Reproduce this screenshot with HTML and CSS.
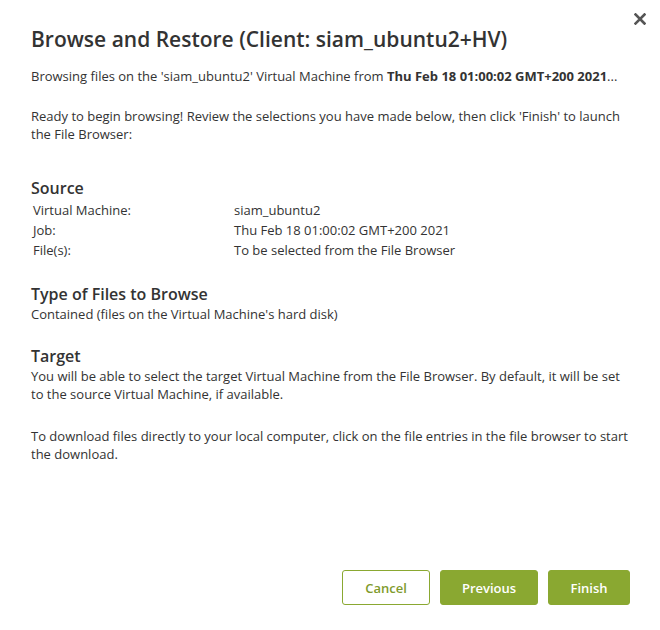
FILE: index.html
```html
<!DOCTYPE html>
<html>
<head>
<meta charset="utf-8">
<link rel="stylesheet" href="styles.css">
</head>
<body>
<div class="dialog">
  <button class="close" aria-label="Close">
    <svg width="12" height="12" viewBox="0 0 12 12"><path d="M1.5 1.5 L10.5 10.5 M10.5 1.5 L1.5 10.5" stroke="#555" stroke-width="2.6" stroke-linecap="square"/></svg>
  </button>
  <h1 class="title">Browse and Restore (Client: siam_ubuntu2+HV)</h1>
  <p class="lead">Browsing files on the 'siam_ubuntu2' Virtual Machine from <b>Thu Feb 18 01:00:02 GMT+200 2021</b>...</p>
  <p class="para">Ready to begin browsing! Review the selections you have made below, then click 'Finish' to launch the File Browser:</p>

  <section class="section source">
    <h2 class="heading">Source</h2>
    <div class="grid">
      <span>Virtual Machine:</span><span>siam_ubuntu2</span>
      <span>Job:</span><span>Thu Feb 18 01:00:02 GMT+200 2021</span>
      <span>File(s):</span><span>To be selected from the File Browser</span>
    </div>
  </section>

  <section class="section type">
    <h2 class="heading">Type of Files to Browse</h2>
    <p class="text">Contained (files on the Virtual Machine's hard disk)</p>
  </section>

  <section class="section target">
    <h2 class="heading">Target</h2>
    <p class="text">You will be able to select the target Virtual Machine from the File Browser. By default, it will be set to the source Virtual Machine, if available.</p>
    <p class="text spaced">To download files directly to your local computer, click on the file entries in the file browser to start the download.</p>
  </section>

  <div class="actions">
    <button class="btn outline">Cancel</button>
    <button class="btn solid prev">Previous</button>
    <button class="btn solid finish">Finish</button>
  </div>
</div>
</body>
</html>
```
FILE: styles.css
```css
html, body {
  margin: 0;
  padding: 0;
  background: #fff;
}
body {
  font-family: "Open Sans", "Liberation Sans", sans-serif;
  color: #333;
  font-size: 13px;
}
.dialog {
  position: relative;
  width: 660px;
  height: 630px;
  box-sizing: border-box;
  padding: 24px 30px 0 31px;
  display: flex;
  flex-direction: column;
}
.close {
  position: absolute;
  top: 13px;
  right: 14px;
  border: 0;
  background: none;
  padding: 0;
  width: 12px;
  height: 12px;
  line-height: 0;
}
.title {
  margin: 0;
  font-size: 21px;
  font-weight: 600;
  line-height: 30px;
  color: #333;
}
.lead {
  margin: 13px 0 0;
  line-height: 18px;
  white-space: nowrap;
}
.lead b { font-weight: 700; }
.para {
  margin: 22px 0 0;
  line-height: 18px;
}
.section.source { margin-top: 34px; }
.section.type { margin-top: 23px; }
.section.target { margin-top: 22px; }
.heading {
  margin: 0;
  font-size: 16px;
  font-weight: 600;
  line-height: 22px;
}
.grid {
  display: grid;
  grid-template-columns: 201px 1fr;
  padding-left: 2px;
  margin-top: 1px;
  line-height: 20px;
}
.text {
  margin: 0;
  line-height: 18px;
}
.text.spaced { margin-top: 24px; }
.actions {
  margin-top: auto;
  margin-bottom: 25px;
  display: flex;
  justify-content: flex-end;
  gap: 10px;
}
.btn {
  height: 35px;
  border-radius: 3px;
  font-family: "Open Sans", "Liberation Sans", sans-serif;
  font-size: 13px;
  font-weight: 600;
  padding: 0;
  cursor: pointer;
}
.outline {
  width: 88px;
  background: #fff;
  border: 1px solid #8aa831;
  color: #7f9b2c;
}
.solid {
  background: #8aa831;
  border: 1px solid #8aa831;
  color: #fff;
}
.prev { width: 98px; }
.finish { width: 82px; }
```
